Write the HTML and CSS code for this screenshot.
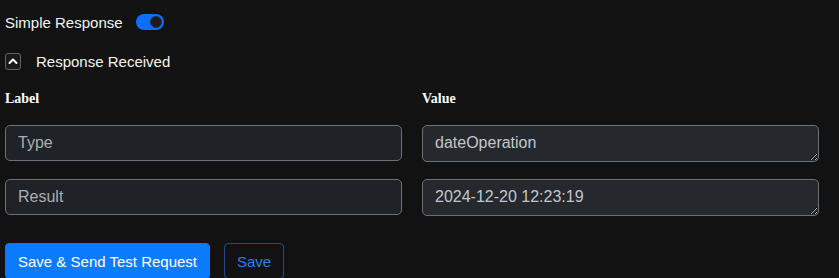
FILE: index.html
```html
<!DOCTYPE html>
<html lang="en">
<head>
    <meta charset="UTF-8">
    <title>Response Test</title>
    <link rel="stylesheet" href="styles.css">
</head>
<body>
    <div class="switch-row">
        <span>Simple Response</span>
        <span class="switch"><span class="knob"></span></span>
    </div>

    <div class="section-head">
        <span class="chevron-box">
            <svg width="10" height="8" viewBox="0 0 10 8"><path d="M1.5 6 L5 2.5 L8.5 6" fill="none" stroke="#fff" stroke-width="2" stroke-linecap="round" stroke-linejoin="round"/></svg>
        </span>
        <span>Response Received</span>
    </div>

    <div class="grid labels">
        <label>Label</label>
        <label>Value</label>
    </div>

    <div class="grid fields">
        <input type="text" class="key-input" value="Type" readonly>
        <textarea class="value-input" rows="1">dateOperation</textarea>
        <input type="text" class="key-input" value="Result" readonly>
        <textarea class="value-input" rows="1">2024-12-20 12:23:19</textarea>
    </div>

    <div class="actions">
        <button class="btn btn-primary">Save &amp; Send Test Request</button>
        <button class="btn btn-outline">Save</button>
    </div>
</body>
</html>
```

FILE: styles.css
```css
body {
    margin: 0;
    padding: 0 20px 0 5px;
    background: #121212;
    color: #f2f2f2;
    font-family: "Liberation Sans", Arial, sans-serif;
    font-size: 15px;
    height: 278px;
    overflow: hidden;
}

.switch-row {
    display: flex;
    align-items: center;
    height: 44px;
}

.switch {
    position: relative;
    width: 28px;
    height: 16px;
    margin-left: 13px;
    border-radius: 8px;
    background: #0d6efd;
}

.switch .knob {
    position: absolute;
    top: 2px;
    right: 2px;
    width: 10px;
    height: 10px;
    border-radius: 50%;
    background: #1c1c1c;
    border: 1px solid #2a2a2a;
}

.section-head {
    display: flex;
    align-items: center;
    height: 30px;
    margin-top: 2px;
}

.chevron-box {
    display: flex;
    align-items: center;
    justify-content: center;
    width: 14px;
    height: 15px;
    border: 1px solid #5f646a;
    border-radius: 3px;
    background: #181a1c;
    margin-right: 15px;
}

.grid {
    display: grid;
    grid-template-columns: 1fr 1fr;
    column-gap: 20px;
}

.labels {
    margin-top: 13px;
    height: 20px;
    align-items: center;
}

.labels label {
    font-family: "Liberation Serif", "Times New Roman", serif;
    font-weight: bold;
    font-size: 14px;
    color: #fff;
}

.fields {
    margin-top: 16px;
    row-gap: 17px;
}

.key-input,
.value-input {
    box-sizing: border-box;
    width: 100%;
    height: 36px;
    margin: 0;
    padding: 6px 12px;
    font-family: "Liberation Sans", Arial, sans-serif;
    font-size: 16px;
    line-height: 22px;
    border: 1px solid #6c7177;
    border-radius: 5px;
    outline: none;
}

.key-input {
    background: #1f2226;
    color: #a9afb5;
}

.value-input {
    height: 37px;
    background: #25282c;
    color: #c2c7cc;
    resize: vertical;
    overflow: hidden;
}

.actions {
    display: flex;
    gap: 14px;
    margin-top: 27px;
}

.btn {
    height: 36px;
    padding: 0 12px;
    font-family: "Liberation Sans", Arial, sans-serif;
    font-size: 15px;
    border-radius: 4px;
}

.btn-primary {
    background: #0b7bfe;
    border: 1px solid #0b7bfe;
    color: #fff;
}

.btn-outline {
    background: transparent;
    border: 1px solid #1d4c8e;
    color: #2b80ee;
}
```
